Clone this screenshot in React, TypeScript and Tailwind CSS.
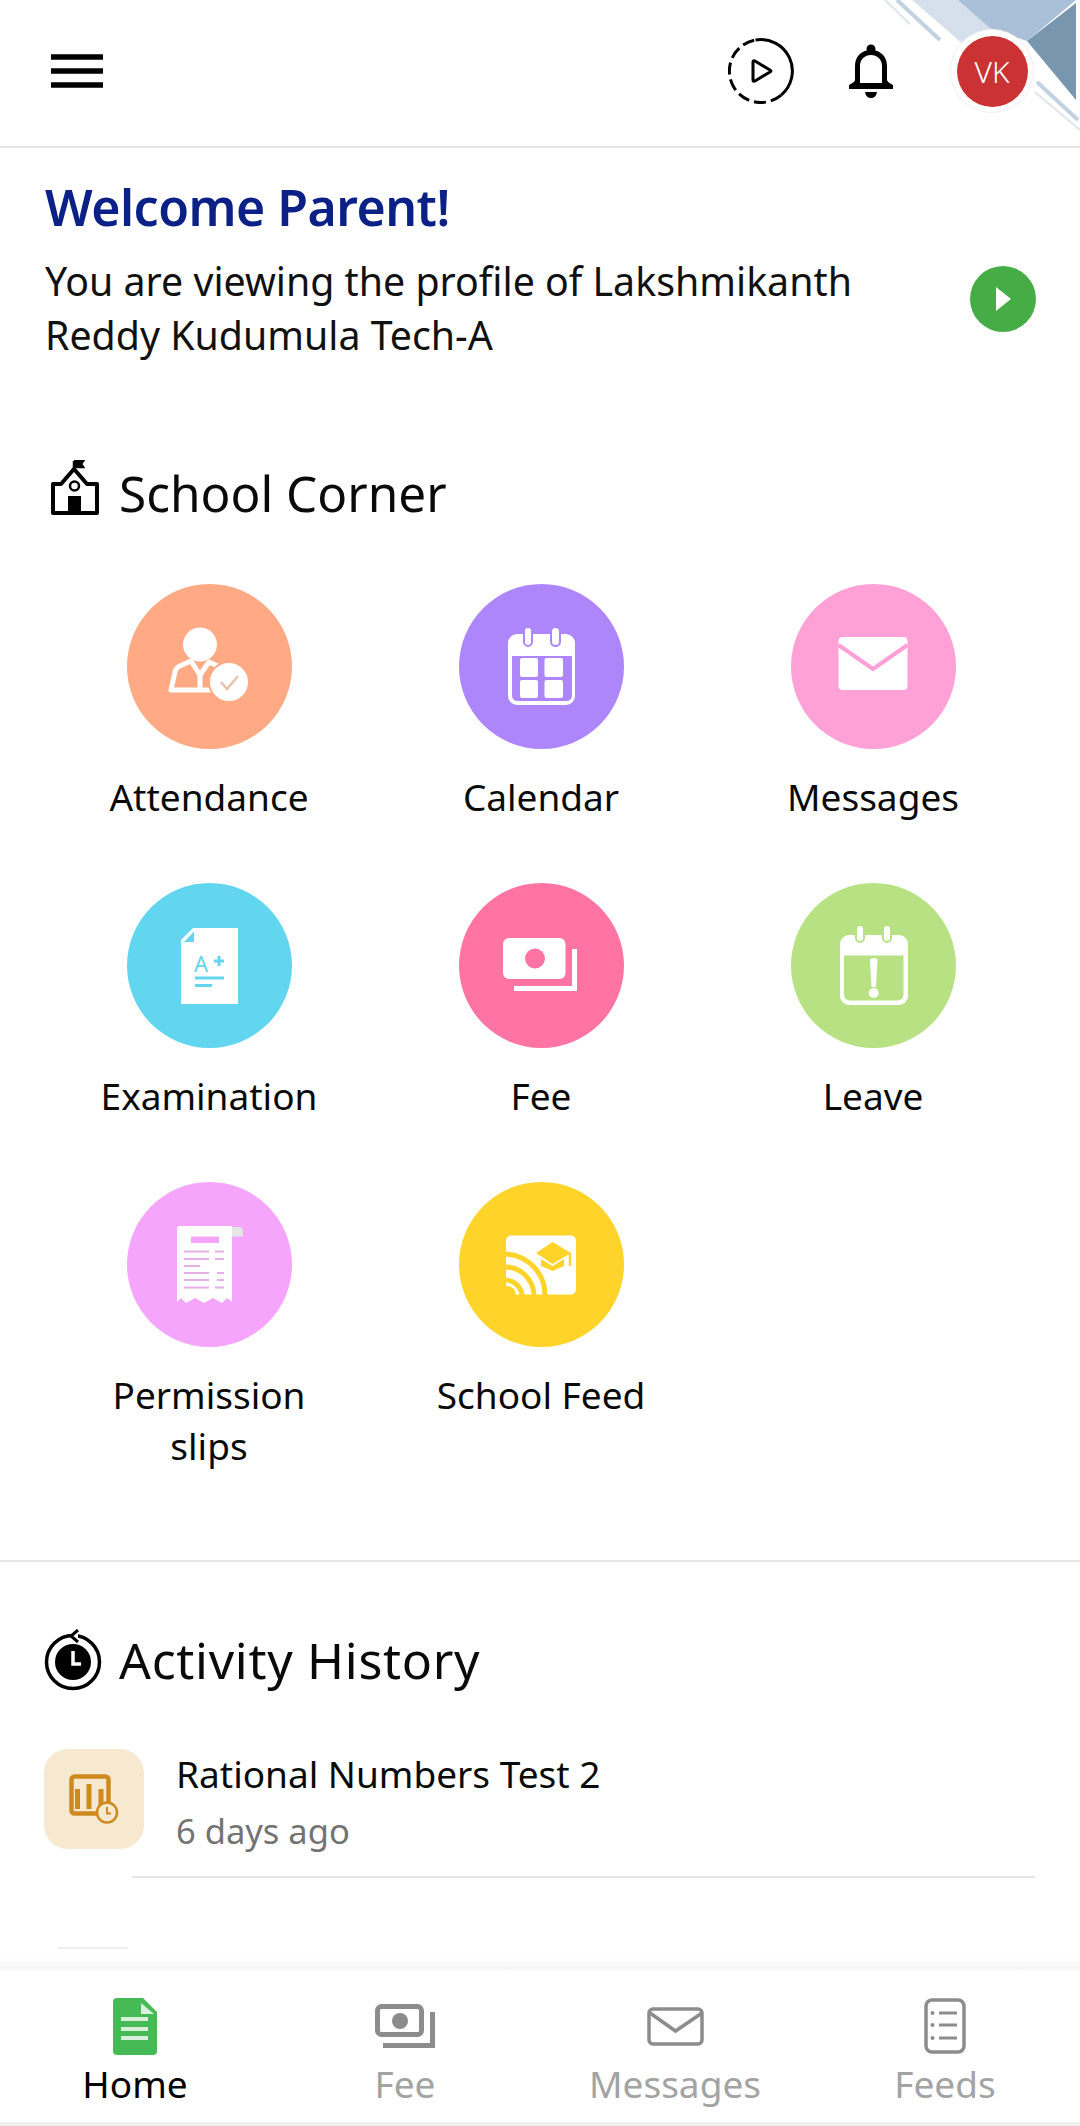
import type { ReactNode } from 'react';

const font = { fontFamily: '"Noto Sans", "Open Sans", sans-serif' };

function HeaderCorner() {
  return (
    <svg className="absolute top-0 right-0" width="200" height="140" viewBox="880 0 200 140">
      <polygon points="912,0 960,0 1010,40 970,50" fill="#d6e0ec" />
      <polygon points="958,0 1076,0 1027,41 990,28" fill="#aabfd8" />
      <polygon points="1076,3 1076,100 1027,41" fill="#7896ae" />
      <path d="M897 0 L940 40 M1037 82 L1078 120" stroke="#c3d2e0" strokeWidth="4" />
      <path d="M885 0 L910 24 M1035 92 L1080 130" stroke="#dde5ed" strokeWidth="2" />
    </svg>
  );
}

function Attendance() {
  return (
    <svg width="165" height="165" viewBox="0 0 165 165">
      <circle cx="73" cy="60.500" r="17" fill="#fff" />
      <path d="M44 106 L48 88 Q49 83 55 81 L64 77 L73 91 L82 78 L95 84 L88 106 Z" fill="none" stroke="#fff" strokeWidth="5" strokeLinejoin="round" />
      <path d="M73 91 V106" stroke="#fff" strokeWidth="5" />
      <circle cx="102" cy="98" r="20" fill="#fff" stroke="#ffaa84" strokeWidth="2" />
      <path d="M94 98 L100 105 L111 92" fill="none" stroke="#e8c4b0" strokeWidth="2.500" />
    </svg>
  );
}

function CalendarGrid() {
  return (
    <svg width="165" height="165" viewBox="0 0 165 165">
      <rect x="49" y="50" width="67" height="71" rx="9" fill="#fff" />
      <path d="M53 72 H113 V111 Q113 117 107 117 H59 Q53 117 53 111 Z" fill="#ad86fc" />
      <rect x="65" y="43" width="8" height="19" rx="4" fill="#fff" stroke="#ad86fc" strokeWidth="2" />
      <rect x="92" y="43" width="9" height="19" rx="4.500" fill="#fff" stroke="#ad86fc" strokeWidth="2" />
      <rect x="61" y="74" width="18" height="19" rx="2" fill="#fff" />
      <rect x="85.500" y="74" width="18.500" height="19" rx="2" fill="#fff" />
      <rect x="61" y="96" width="18" height="18" rx="2" fill="#fff" />
      <rect x="85.500" y="96" width="18.500" height="18" rx="2" fill="#fff" />
    </svg>
  );
}

function Envelope() {
  return (
    <svg width="165" height="165" viewBox="0 0 165 165">
      <rect x="47.500" y="53" width="69" height="53" rx="4" fill="#fff" />
      <path d="M47.500 61 L82 85 L116.500 61" fill="none" stroke="#ffa0d6" strokeWidth="4" />
    </svg>
  );
}

function ExamPaper() {
  return (
    <svg width="165" height="165" viewBox="0 0 165 165">
      <path d="M66 45 H111 V121 H54 V57 Z" fill="#fff" />
      <path d="M67 48.500 V59 H57 Z" fill="#62d6ee" />
      <text x="67" y="89" fontSize="22" fill="#62d6ee" style={font}>A</text>
      <path d="M87 78 H97 M92 73 V83" stroke="#62d6ee" strokeWidth="3" />
      <path d="M68 95 H97 M68 102.500 H85" stroke="#62d6ee" strokeWidth="3" />
    </svg>
  );
}

function FeeNotes() {
  return (
    <svg width="165" height="165" viewBox="0 0 165 165">
      <rect x="44" y="55" width="62.500" height="41" rx="6" fill="#fff" />
      <circle cx="76" cy="75.500" r="10" fill="#ff74a2" />
      <path d="M55 105.500 H115.500 V66" fill="none" stroke="#fff" strokeWidth="5" />
    </svg>
  );
}

function LeaveCal() {
  return (
    <svg width="165" height="165" viewBox="0 0 165 165">
      <rect x="49" y="52" width="68" height="70" rx="9" fill="#fff" />
      <path d="M53 72.500 H112.500 V111 Q112.500 117.500 106 117.500 H59 Q53 117.500 53 111 Z" fill="#b7e182" />
      <rect x="65" y="42" width="8" height="17" rx="4" fill="#fff" stroke="#b7e182" strokeWidth="2" />
      <rect x="92" y="42" width="8" height="17" rx="4" fill="#fff" stroke="#b7e182" strokeWidth="2" />
      <path d="M79 77 Q79 75 82.500 75 Q86.500 75 86.500 77 L85 104 H80.500 Z" fill="#fff" />
      <circle cx="82.700" cy="110" r="5" fill="#fff" />
    </svg>
  );
}

function Receipt() {
  const c = '#e6afe8';
  return (
    <svg width="165" height="165" viewBox="0 0 165 165">
      <path d="M105 45 H112 Q116 45 116 50 V54.500 H105 Z" fill="#e6e6e6" />
      <path d="M50 47 Q50 44 53 44 H105 V120 L100 116 L95 121 L86 116 L77 121 L68 116 L59 121 L54 116 L50 120 Z" fill="#fff" />
      <rect x="64" y="54.500" width="28" height="6.500" fill="#f5a5fc" />
      <path d="M57 69.500 H82 M88 69.500 H97 M57 77 H82 M88 77 H97 M57 84 H73 M57 91 H82 M90 91 H97 M57 98 H82 M90 98 H97 M57 105.500 H82 M88 105.500 H97" stroke={c} strokeWidth="2" />
    </svg>
  );
}

function SchoolFeed() {
  const y = '#ffd42a';
  return (
    <svg width="165" height="165" viewBox="0 0 165 165">
      <rect x="47" y="53.500" width="70" height="59" rx="5" fill="#fff" />
      <path d="M47 72 A41 41 0 0 1 86 113 M47 85 A29 29 0 0 1 75 113 M47 98 A17 17 0 0 1 63 113" fill="none" stroke={y} strokeWidth="5" />
      <path d="M47 104 A9 9 0 0 1 57 113 H47 Z" fill={y} />
      <path d="M93.500 60 L112 71 L93.500 82 L77 71 Z" fill={y} />
      <path d="M82 77 V84 L93.500 89 L105 84 V77 L93.500 84 Z" fill={y} />
      <path d="M111 71 V84" stroke={y} strokeWidth="2.500" />
    </svg>
  );
}

const corner: { label: ReactNode; bg: string; icon: ReactNode }[] = [
  { label: 'Attendance', bg: 'bg-[#ffaa84]', icon: <Attendance /> },
  { label: 'Calendar', bg: 'bg-[#ad86fc]', icon: <CalendarGrid /> },
  { label: 'Messages', bg: 'bg-[#ffa0d6]', icon: <Envelope /> },
  { label: 'Examination', bg: 'bg-[#62d6ee]', icon: <ExamPaper /> },
  { label: 'Fee', bg: 'bg-[#ff74a2]', icon: <FeeNotes /> },
  { label: 'Leave', bg: 'bg-[#b7e182]', icon: <LeaveCal /> },
  { label: <>Permission<br />slips</>, bg: 'bg-[#f5a5fc]', icon: <Receipt /> },
  { label: 'School Feed', bg: 'bg-[#ffd42a]', icon: <SchoolFeed /> },
];

const NAV_GREY = '#8c8c8c';

function NavItem({ label, active, children }: { label: string; active?: boolean; children: ReactNode }) {
  return (
    <div className="flex flex-col items-center">
      <div className="h-[58px] flex items-center justify-center">{children}</div>
      <div className={`text-[37px] leading-[48px] mt-[5px] ${active ? 'text-black' : 'text-[#a3a3a3]'}`}>{label}</div>
    </div>
  );
}

export default function App() {
  return (
    <div className="relative flex flex-col h-[2126px] w-[1080px] overflow-hidden bg-white text-black" style={font}>
      <header className="relative h-[148px] shrink-0 border-b-2 border-[#e6e6e6] flex items-center justify-between pl-[51px] pr-[46px] pb-[4px]">
        <HeaderCorner />
        <svg width="52" height="34" viewBox="0 0 52 34">
          <path d="M0 3 H52 M0 17 H52 M0 31 H52" stroke="#000" strokeWidth="5.500" />
        </svg>
        <div className="relative flex items-center">
          <svg width="66" height="66" viewBox="0 0 66 66" className="mr-[55px]">
            <path d="M27.500 2 A31.500 31.500 0 0 1 53.200 57.100" fill="none" stroke="#000" strokeWidth="3" />
            <path d="M53.200 57.100 A31.500 31.500 0 1 1 27.500 2" fill="none" stroke="#000" strokeWidth="3" strokeDasharray="12 5" />
            <path d="M25 24 Q25 22 27 23 L42 32 Q44 33 42 34 L27 43 Q25 44 25 42 Z" fill="none" stroke="#000" strokeWidth="3" strokeLinejoin="round" />
          </svg>
          <svg width="44" height="54" viewBox="0 0 44 54" className="mr-[57px]">
            <circle cx="22" cy="5" r="4.500" fill="#000" />
            <path d="M6 39 V22 C6 12 13 6 22 6 C31 6 38 12 38 22 V36 Q38 38 44 41 V45 H0 V41 Q6 38 6 36 Z M11 39 H33 V22 C33 15 28 11 22 11 C16 11 11 15 11 22 Z" fill="#000" fillRule="evenodd" />
            <path d="M16 48 H28 Q27 54 22 54 Q17 54 16 48 Z" fill="#000" />
          </svg>
          <div className="relative w-[84px] h-[84px] rounded-full bg-white border border-[#f0f0f0] flex items-center justify-center">
            <div className="w-[71px] h-[71px] rounded-full bg-[#cb3234] text-white text-[30px] font-light flex items-center justify-center">VK</div>
          </div>
        </div>
      </header>

      <section className="relative pl-[45px] pr-[45px] pt-[26px]">
        <h1 className="text-[50px] leading-[66px] font-semibold text-[#0b2186] tracking-[-0.5px]">Welcome Parent!</h1>
        <p className="text-[39.300px] leading-[54px] w-[860px] mt-[14px] text-[#111]">You are viewing the profile of Lakshmikanth Reddy Kudumula Tech-A</p>
        <div className="absolute right-[44px] top-[118px] w-[66px] h-[66px] rounded-full bg-[#46ac46] flex items-center justify-center">
          <svg width="18" height="26" viewBox="0 0 18 26"><path d="M2 1 L17 13 L2 25 Z" fill="#fff" /></svg>
        </div>
      </section>

      <section className="mt-[98px] border-b-2 border-[#e6e6e6] h-[1102px] shrink-0">
        <div className="flex items-center pl-[50px]">
          <svg width="50" height="56" viewBox="0 0 50 56" className="mr-[19px] mb-[10px]">
            <path d="M24 1 V10 M24 1 H33 L31 4 L33 7 H24" fill="#000" stroke="#000" strokeWidth="2.500" />
            <path d="M24 9 L37 24 H47 V53 H3 V24 H11 Z" fill="none" stroke="#000" strokeWidth="4" strokeLinejoin="round" />
            <circle cx="24.500" cy="26" r="4.500" fill="none" stroke="#000" strokeWidth="2.500" />
            <rect x="18" y="36" width="13" height="18" fill="#000" />
          </svg>
          <h2 className="text-[49.500px] leading-[66px] text-[#0a0a0a]">School Corner</h2>
        </div>

        <div className="grid grid-cols-3 pl-[43px] pr-[41px] mt-[58px]">
          {corner.map((item, i) => (
            <div key={i} className="flex flex-col items-center h-[299px]">
              <div className={`w-[165px] h-[165px] rounded-full ${item.bg}`}>{item.icon}</div>
              <div className="text-[37px] leading-[51px] mt-[22px] text-center text-[#0a0a0a]">{item.label}</div>
            </div>
          ))}
        </div>
      </section>

      <section className="flex-1 min-h-0 overflow-hidden">
        <div className="flex items-center pl-[44px] pt-[65px]">
          <svg width="58" height="62" viewBox="0 0 58 62" className="mr-[17px]">
            <circle cx="29" cy="33" r="26.500" fill="none" stroke="#000" strokeWidth="3.500" />
            <circle cx="29" cy="33" r="18" fill="#000" />
            <path d="M29 22 V35 H37" fill="none" stroke="#fff" strokeWidth="3.500" />
            <path d="M34 1 L27 7 L34 13" fill="#fff" stroke="#000" strokeWidth="3" />
          </svg>
          <h2 className="text-[50px] leading-[66px] tracking-[0.7px] text-[#0a0a0a]">Activity History</h2>
        </div>
        <div className="flex pl-[44px] pr-[45px] mt-[56px]">
          <div className="w-[100px] h-[100px] rounded-[24px] bg-[#f7e8d0] shrink-0">
            <svg width="100" height="100" viewBox="0 0 100 100">
              <rect x="27.500" y="27.500" width="37" height="37" rx="3" fill="none" stroke="#cf8a1f" strokeWidth="4.500" />
              <path d="M33.500 60 V40 M45 60 V35 M57 60 V40" stroke="#cf8a1f" strokeWidth="5" />
              <circle cx="63" cy="63.500" r="10" fill="#f7e8d0" stroke="#cf8a1f" strokeWidth="2.500" />
              <path d="M63 58 V64.500 H67" fill="none" stroke="#cf8a1f" strokeWidth="2" />
            </svg>
          </div>
          <div className="ml-[32px]">
            <div className="text-[37px] leading-[50px] text-[#0a0a0a]">Rational Numbers Test 2</div>
            <div className="text-[34.500px] leading-[48px] mt-[8px] text-[#737373]">6 days ago</div>
          </div>
        </div>
        <div className="ml-[132px] mr-[45px] mt-[21px] h-[2px] bg-[#e6e6e6]" />
        <div className="ml-[58px] mt-[69px] w-[70px] h-[2px] bg-[#eeeeee]" />
      </section>

      <div className="h-[12px] shrink-0 bg-gradient-to-b from-white to-[#f5f5f5]" />
      <nav className="h-[156px] shrink-0 bg-white border-b-[4px] border-[#efefef] grid grid-cols-4 pt-[27px]">
        <NavItem label="Home" active>
          <svg width="44" height="57" viewBox="0 0 44 57" className="block">
            <path d="M4 0 H30 L44 14 V53 Q44 57 40 57 H4 Q0 57 0 53 V4 Q0 0 4 0 Z" fill="#46bb55" />
            <path d="M28 5 L41 16 H28 Z" fill="#d9f0dc" />
            <path d="M8 21 H35 M8 31 H35 M8 40 H35" stroke="#d9f0dc" strokeWidth="4" />
          </svg>
        </NavItem>
        <NavItem label="Fee">
          <svg width="60" height="44" viewBox="0 0 60 44" className="block">
            <rect x="2.500" y="2.500" width="44" height="28" rx="4" fill="none" stroke={NAV_GREY} strokeWidth="5" />
            <circle cx="25" cy="17" r="8" fill={NAV_GREY} />
            <path d="M8 41.500 H57.500 V8" fill="none" stroke={NAV_GREY} strokeWidth="5" />
          </svg>
        </NavItem>
        <NavItem label="Messages">
          <svg width="57" height="39" viewBox="0 0 57 39" className="block">
            <rect x="2" y="2" width="53" height="35" rx="4" fill="none" stroke={NAV_GREY} strokeWidth="3.500" />
            <path d="M3 6 L28.500 24 L55 6" fill="none" stroke={NAV_GREY} strokeWidth="3.500" />
          </svg>
        </NavItem>
        <NavItem label="Feeds">
          <svg width="42" height="56" viewBox="0 0 42 56" className="block">
            <rect x="2" y="2" width="38" height="52" rx="6" fill="none" stroke={NAV_GREY} strokeWidth="3.500" />
            <path d="M15 15 H33 M15 27 H33 M15 40 H33" stroke={NAV_GREY} strokeWidth="3" />
            <circle cx="8.500" cy="15" r="2" fill={NAV_GREY} />
            <circle cx="8.500" cy="27" r="2" fill={NAV_GREY} />
            <circle cx="8.500" cy="40" r="2" fill={NAV_GREY} />
          </svg>
        </NavItem>
      </nav>
    </div>
  );
}
